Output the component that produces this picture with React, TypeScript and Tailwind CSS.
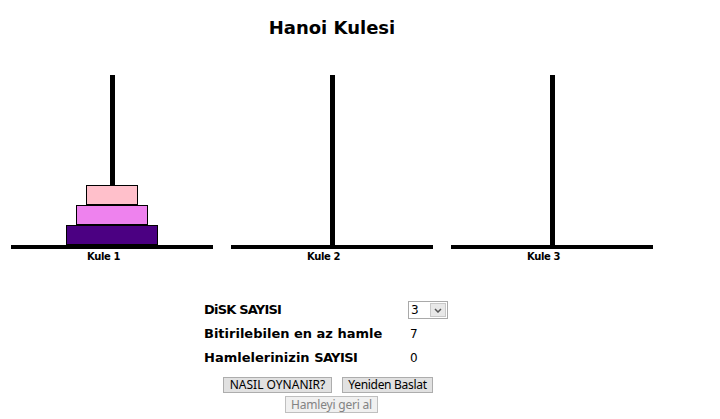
import React from "react";

const disks = [
  { w: 52, color: "bg-[#ffc0cb]" },
  { w: 72, color: "bg-[#ee82ee]" },
  { w: 92, color: "bg-[#4b0082]" },
];

function Tower({ label, withDisks }: { label: string; withDisks?: boolean }) {
  return (
    <div className="flex w-[202px] flex-col items-center">
      <div className="relative flex h-[170px] w-full flex-col items-center justify-end">
        <div className="absolute left-[99px] top-0 h-[170px] w-[5px] bg-black" />
        {withDisks &&
          disks.map((d) => (
            <div
              key={d.w}
              style={{ width: d.w }}
              className={`relative h-[20px] border border-black ${d.color}`}
            />
          ))}
      </div>
      <div className="h-[4px] w-full bg-black" />
      <div className="mr-[17px] mt-[1px] text-[10px] font-bold leading-[13px] tracking-[-0.4px] text-black">
        {label}
      </div>
    </div>
  );
}

const btnFont = { fontFamily: '"Noto Sans", "DejaVu Sans", sans-serif' };

export default function App() {
  return (
    <div
      className="relative h-[419px] w-[720px] overflow-hidden bg-white text-black"
      style={{ fontFamily: '"DejaVu Sans", Verdana, sans-serif' }}
    >
      <div className="w-[664px] pt-[15px] text-center text-[18px] font-bold leading-[26px]">
        Hanoi Kulesi
      </div>
      <div className="mt-[34px] flex gap-[18px] pl-[11px]">
        <Tower label="Kule 1" withDisks />
        <Tower label="Kule 2" />
        <Tower label="Kule 3" />
      </div>
      <div className="mt-[36px] pl-[204px] text-[13px] font-bold">
        <div className="flex h-[22px] items-center">
          <div className="w-[204px] tracking-[-0.8px]">DiSK SAYISI</div>
          <div className="flex h-[18px] w-[40px] items-stretch border border-[#a9a9a9] bg-white font-normal">
            <div className="flex flex-1 items-center pl-[2px] text-[12px]">3</div>
            <div className="m-[1px] flex w-[16px] items-center justify-center border border-[#c8c8c8] bg-[#e8e8e8]">
              <svg width="8" height="5" viewBox="0 0 8 5">
                <path d="M1 1 L4 4 L7 1" stroke="#555" strokeWidth="1.5" fill="none" />
              </svg>
            </div>
          </div>
        </div>
        <div className="flex h-[25px] items-center">
          <div className="w-[206px]">Bitirilebilen en az hamle</div>
          <div className="text-[12px] font-normal">7</div>
        </div>
        <div className="flex h-[23px] items-center">
          <div className="w-[206px]">
            Hamlelerinizin <span className="tracking-[-0.6px]">SAYISI</span>
          </div>
          <div className="text-[12px] font-normal">0</div>
        </div>
      </div>
      <div className="mt-[8px] flex gap-[10px] pl-[223px] text-[12px] leading-none" style={btnFont}>
        <button className="flex h-[16px] w-[109px] items-center justify-center border border-[#adadad] bg-[#e1e1e1] text-black">
          NASIL OYNANIR?
        </button>
        <button className="flex h-[16px] w-[91px] items-center justify-center border border-[#adadad] bg-[#e1e1e1] tracking-[-0.3px] text-black">
          Yeniden Baslat
        </button>
      </div>
      <div className="mt-[3px] pl-[285px] text-[12px] leading-none" style={btnFont}>
        <button
          disabled
          className="flex h-[17px] w-[93px] items-center justify-center border border-[#bfbfbf] bg-[#f0f0f0] tracking-[-0.2px] text-[#838383]"
        >
          Hamleyi geri al
        </button>
      </div>
    </div>
  );
}
